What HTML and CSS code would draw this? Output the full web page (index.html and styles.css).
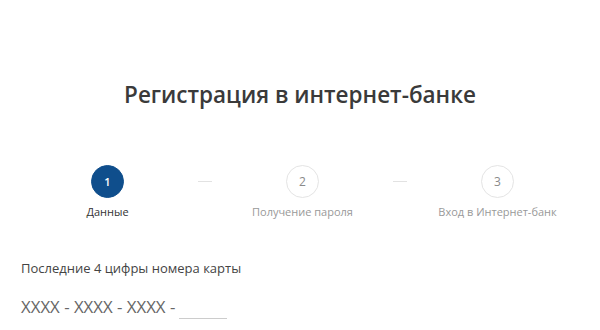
FILE: index.html
```html
<!DOCTYPE html>
<html lang="ru">
<head>
    <meta charset="UTF-8">
    <meta name="viewport" content="width=device-width, initial-scale=1.0">
    <title>Регистрация в интернет-банке</title>
    <link rel="stylesheet" href="styles.css">
</head>
<body>
    <div class="page">
        <h1 class="title">Регистрация в интернет-банке</h1>

        <div class="steps">
            <div class="step active">
                <div class="step-circle">1</div>
                <div class="step-label">Данные</div>
            </div>
            <div class="step">
                <div class="step-circle">2</div>
                <div class="step-label">Получение пароля</div>
            </div>
            <div class="step">
                <div class="step-circle">3</div>
                <div class="step-label">Вход в Интернет-банк</div>
            </div>
        </div>

        <div class="form">
            <div class="form-label">Последние 4 цифры номера карты</div>
            <div class="card-row">
                <span class="card-mask">XXXX - XXXX - XXXX -</span>
                <input type="text" class="card-input" maxlength="4">
            </div>
        </div>
    </div>
</body>
</html>
```

FILE: styles.css
```css
body {
    margin: 0;
    background: #fff;
    font-family: "Open Sans", "Noto Sans", Arial, sans-serif;
    color: #333;
}

.page {
    width: 600px;
    height: 330px;
    overflow: hidden;
}

.title {
    margin: 0;
    padding-top: 80px;
    font-size: 22.5px;
    line-height: 30px;
    font-weight: 600;
    color: #3a3a3a;
    text-align: center;
}

.steps {
    display: flex;
    margin-top: 55px;
    padding-left: 10px;
}

.step {
    position: relative;
    width: 195px;
    display: flex;
    flex-direction: column;
    align-items: center;
}

/* dash between steps */
.step + .step::before {
    content: "";
    position: absolute;
    left: -7px;
    top: 16px;
    width: 14px;
    height: 1px;
    background: #e2e2e2;
}

.step-circle {
    width: 31px;
    height: 31px;
    border: 1px solid #e4e4e4;
    border-radius: 50%;
    display: flex;
    align-items: center;
    justify-content: center;
    font-size: 12px;
    color: #8a8a8a;
}

.step.active .step-circle {
    background: #0f4e8c;
    border-color: #0f4e8c;
    color: #fff;
    font-weight: 600;
    font-size: 11px;
}

.step-label {
    margin-top: 6px;
    font-size: 11px;
    line-height: 15px;
    color: #999;
}

.step.active .step-label {
    color: #333;
}

.form {
    margin-top: 40px;
    padding-left: 21px;
}

.form-label {
    font-size: 13px;
    line-height: 18px;
    color: #444;
}

.card-row {
    display: flex;
    align-items: flex-end;
    margin-top: 18px;
}

.card-mask {
    font-size: 16.8px;
    line-height: 24px;
    color: #666;
}

.card-input {
    width: 48px;
    margin-left: 4px;
    padding: 0;
    height: 20px;
    border: none;
    border-bottom: 1px solid #ccc;
    outline: none;
    font: inherit;
    font-size: 17px;
    background: transparent;
}
```
